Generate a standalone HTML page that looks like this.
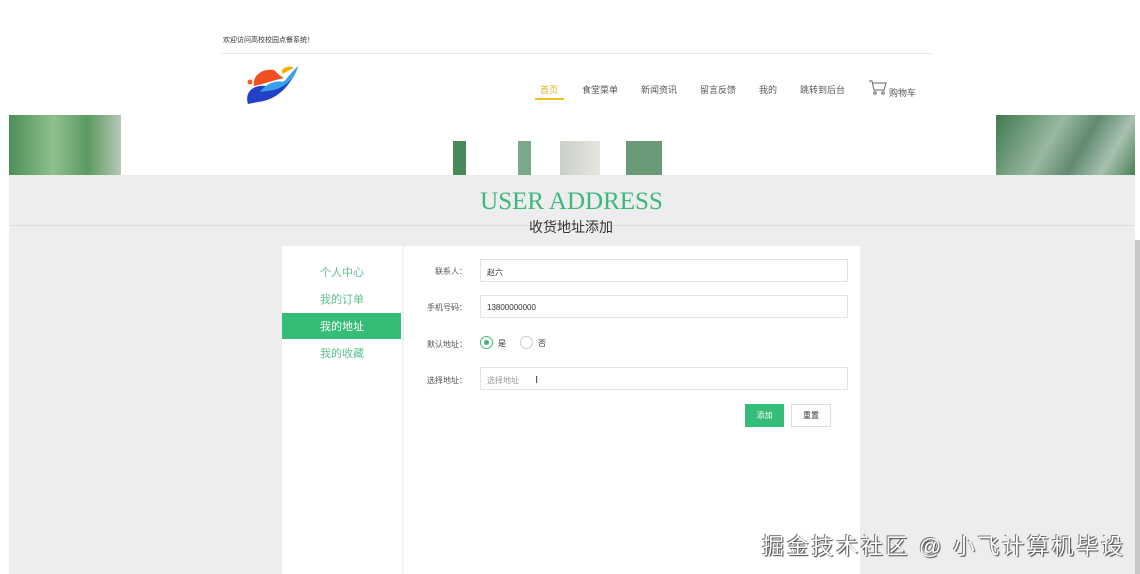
<!DOCTYPE html>
<html><head><meta charset="utf-8"><style>
*{margin:0;padding:0;box-sizing:border-box}
body{width:1140px;height:574px;overflow:hidden;background:#fff;font-family:"Liberation Sans","Noto Sans CJK SC",sans-serif;position:relative;color:#333}
.a{position:absolute}
.nav span{position:absolute;top:83px;font-size:9px;color:#555}
.lbl{position:absolute;left:405px;width:62px;text-align:right;font-size:8px;color:#555}
.inp{position:absolute;left:480px;width:368px;height:23px;border:1px solid #e2e2e2;background:#fff;font-size:8px;padding:7px 6px;color:#333}
.side{position:absolute;left:320px;font-size:11px;color:#5cc28e}
</style></head><body>
<div class="a" style="left:223px;top:35px;font-size:7px;color:#333">欢迎访问高校校园点餐系统！</div>
<div class="a" style="left:221px;top:53px;width:711px;height:1px;background:#e8e8e8"></div>
<svg class="a" style="left:244px;top:64px" width="56" height="44" viewBox="0 0 56 44">
<path d="M4 40 C0 28 10 20 22 22 C32 24 40 18 52 8 C44 24 32 36 14 38 Z" fill="#2340c8"/>
<path d="M16 28 C22 20 30 16 40 18 C46 10 50 6 54 2 C52 12 44 22 30 26 Z" fill="#3aa0e8"/>
<path d="M10 22 C8 12 18 4 30 6 C34 10 36 12 40 14 C30 16 20 20 10 22Z" fill="#f05020"/>
<circle cx="6" cy="18" r="2.5" fill="#f06020"/>
<path d="M38 6 C42 2 48 2 50 4 C46 6 42 8 38 10Z" fill="#f8b000"/>
</svg>
<div class="nav">
<span style="left:540px;color:#e0b020">首页</span>
<div class="a" style="left:535px;top:98px;width:29px;height:2px;background:#f0c020"></div>
<span style="left:582px">食堂菜单</span>
<span style="left:641px">新闻资讯</span>
<span style="left:700px">留言反馈</span>
<span style="left:759px">我的</span>
<span style="left:800px">跳转到后台</span>
<span style="left:889px;top:86px">购物车</span>
</div>
<svg class="a" style="left:868px;top:80px" width="20" height="16" viewBox="0 0 20 16" fill="none" stroke="#666" stroke-width="1"><path d="M1 1h3l2 9h10l2-7H5"/><circle cx="7" cy="13" r="1.2"/><circle cx="15" cy="13" r="1.2"/></svg>
<div class="a" style="left:9px;top:115px;width:112px;height:60px;background:linear-gradient(90deg,#4c8e58,#8fc090 40%,#5a9a60 70%,#b8c8b8)"></div>
<div class="a" style="left:996px;top:115px;width:139px;height:60px;background:linear-gradient(120deg,#3f7a50,#9ab8a0 40%,#608a70 60%,#a8c0b0 80%,#4a8055)"></div>
<div class="a" style="left:453px;top:141px;width:13px;height:34px;background:#4a8a5a"></div>
<div class="a" style="left:518px;top:141px;width:13px;height:34px;background:#7ba888"></div>
<div class="a" style="left:560px;top:141px;width:40px;height:34px;background:linear-gradient(90deg,#c8d0c8,#e8e4e0)"></div>
<div class="a" style="left:626px;top:141px;width:36px;height:34px;background:#6a9a78"></div>
<div class="a" style="left:9px;top:175px;width:1126px;height:399px;background:#ededef"></div>
<div class="a" style="left:9px;top:225px;width:1126px;height:1px;background:#dcdcdc"></div>
<div class="a" style="left:1135px;top:240px;width:5px;height:334px;background:#c8c8c8"></div>
<div class="a" style="left:0;top:188px;width:1140px;text-align:center;font-family:'Liberation Serif',serif;font-size:25px;color:#3cb878;padding-left:3px">USER ADDRESS</div>
<div class="a" style="left:0;top:217px;width:1140px;text-align:center;font-size:14px;color:#333;padding-left:2px">收货地址添加</div>
<div class="a" style="left:282px;top:246px;width:578px;height:328px;background:#fff"></div>
<div class="a" style="left:402px;top:246px;width:2px;height:328px;background:#f2f2f2"></div>
<div class="side" style="top:264px">个人中心</div>
<div class="side" style="top:291px">我的订单</div>
<div class="a" style="left:282px;top:313px;width:119px;height:26px;background:#35bd78"></div>
<div class="side" style="top:318px;color:#fff">我的地址</div>
<div class="side" style="top:345px">我的收藏</div>
<div class="lbl" style="top:266px">联系人：</div>
<div class="inp" style="top:259px">赵六</div>
<div class="lbl" style="top:302px">手机号码：</div>
<div class="inp" style="top:295px">13800000000</div>
<div class="lbl" style="top:339px">默认地址：</div>
<div class="a" style="left:480px;top:336px;width:13px;height:13px;border:1px solid #3cb878;border-radius:50%"></div>
<div class="a" style="left:484px;top:340px;width:5px;height:5px;background:#3cb878;border-radius:50%"></div>
<div class="a" style="left:498px;top:338px;font-size:8px">是</div>
<div class="a" style="left:520px;top:336px;width:13px;height:13px;border:1px solid #ccc;border-radius:50%"></div>
<div class="a" style="left:538px;top:338px;font-size:8px">否</div>
<div class="lbl" style="top:375px">选择地址：</div>
<div class="inp" style="top:367px;color:#999">选择地址 <span style="color:#333;margin-left:14px;font-size:10px">I</span></div>
<div class="a" style="left:745px;top:404px;width:39px;height:23px;background:#35bd78;color:#fff;font-size:8px;text-align:center;line-height:23px">添加</div>
<div class="a" style="left:791px;top:404px;width:40px;height:23px;border:1px solid #ddd;background:#fff;font-size:8px;text-align:center;line-height:21px">重置</div>
<div class="a" style="left:762px;top:529px;font-size:22px;letter-spacing:2.7px;color:#fff;text-shadow:1px 1px 1px #444,-1px -1px 0 #777">掘金技术社区 @ 小飞计算机毕设</div>
</body></html>
